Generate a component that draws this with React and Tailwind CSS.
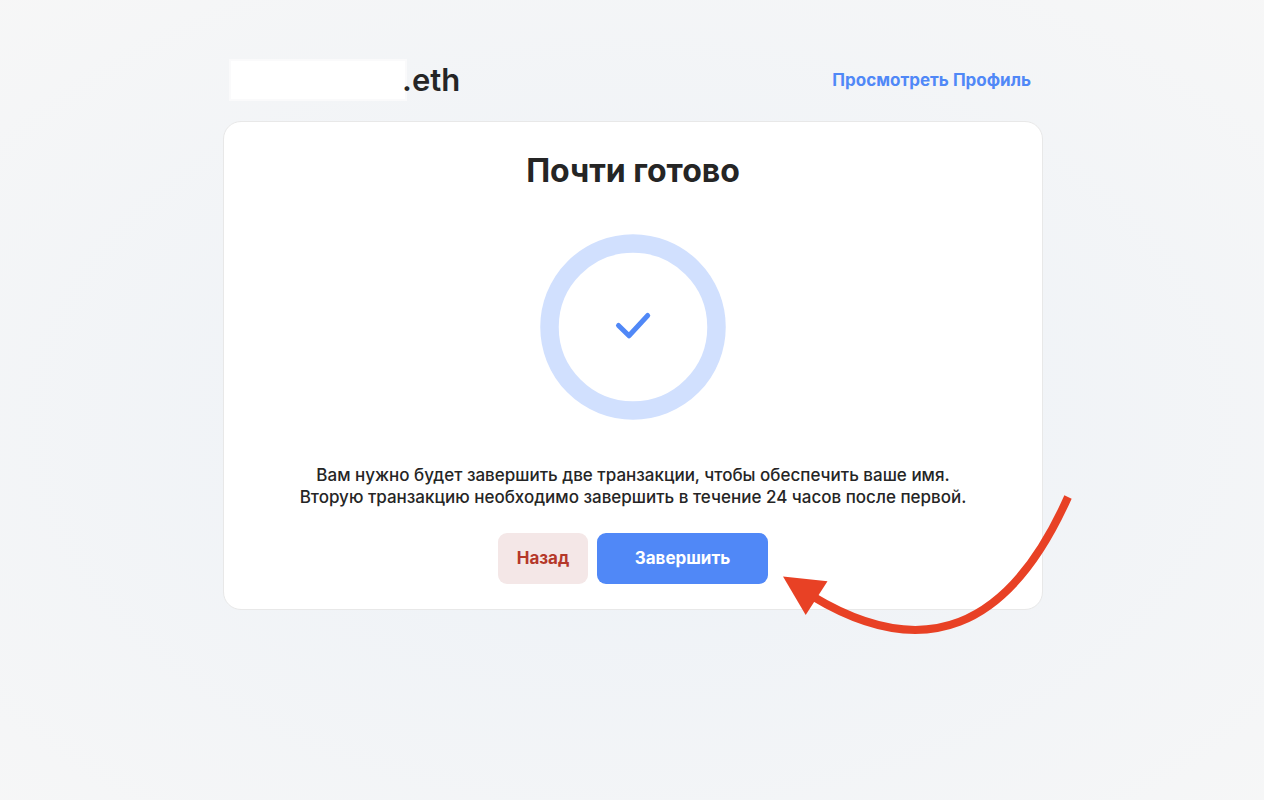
function SuccessRing() {
  return (
    <svg
      role="img"
      aria-label="Готово"
      viewBox="0 0 186 186"
      fill="none"
      className="size-[186px]"
    >
      <circle cx="93" cy="93" r="83.5" stroke="#d1e0fe" strokeWidth="18.5" />
      <path
        d="M78.5 91.5 89 101.8 107.7 81.5"
        stroke="#5088f7"
        strokeWidth="5"
        strokeLinecap="round"
        strokeLinejoin="round"
      />
    </svg>
  );
}

function PointerArrow() {
  return (
    <svg
      aria-hidden="true"
      viewBox="780 490 300 150"
      className="pointer-events-none absolute -right-[38px] -bottom-[31px] h-[150px] w-[300px]"
    >
      <path
        d="M1068 497Q979 697 812 596"
        fill="none"
        stroke="#e84125"
        strokeWidth="8"
      />
      <path d="M783 576.5 827.5 581.3 805.7 615Z" fill="#e84125" />
    </svg>
  );
}

export default function App() {
  return (
    <div className="min-h-screen bg-[#f7f7f7] bg-[radial-gradient(76%_76%_at_50%_53%,#ecf1f7_0%,#f7f7f7_100%)] pr-4 pl-[18px] font-[Inter,sans-serif] text-[#252525]">
      <main className="mx-auto max-w-[820px] pt-[60px]">
        <header className="flex h-10 items-center justify-between pr-3 pl-[6px]">
          <h1 className="flex items-center text-[31px] leading-10 font-semibold">
            <span className="h-[42px] w-[178px] border-2 border-[#fafafb] bg-white" />
            <span className="-ml-[5px]">.eth</span>
          </h1>
          <a href="#profile" className="text-[17px] leading-6 font-bold text-[#5088f7]">
            Просмотреть Профиль
          </a>
        </header>
        <section className="relative mt-[21px] flex flex-col items-center rounded-[18px] border border-[#e8e8e8] bg-white px-4 pt-[29px] pb-[25px]">
          <h2 className="text-[32px] leading-10 font-bold">Почти готово</h2>
          <div className="mt-[43px]">
            <SuccessRing />
          </div>
          <p className="mt-11 text-center text-[17px] leading-[22px] font-medium">
            Вам нужно будет завершить две транзакции, чтобы обеспечить ваше имя.
            <br />
            Вторую транзакцию необходимо завершить в течение 24 часов после первой.
          </p>
          <div className="mt-[25px] flex gap-[9px]">
            <button
              type="button"
              className="h-[51px] w-[90px] rounded-[9px] bg-[#f4e7e7] text-[17px] font-bold text-[#b5382a]"
            >
              Назад
            </button>
            <button
              type="button"
              className="h-[51px] w-[171px] rounded-[9px] bg-[#5088f7] text-[17px] font-bold text-white"
            >
              Завершить
            </button>
          </div>
          <PointerArrow />
        </section>
      </main>
    </div>
  );
}
